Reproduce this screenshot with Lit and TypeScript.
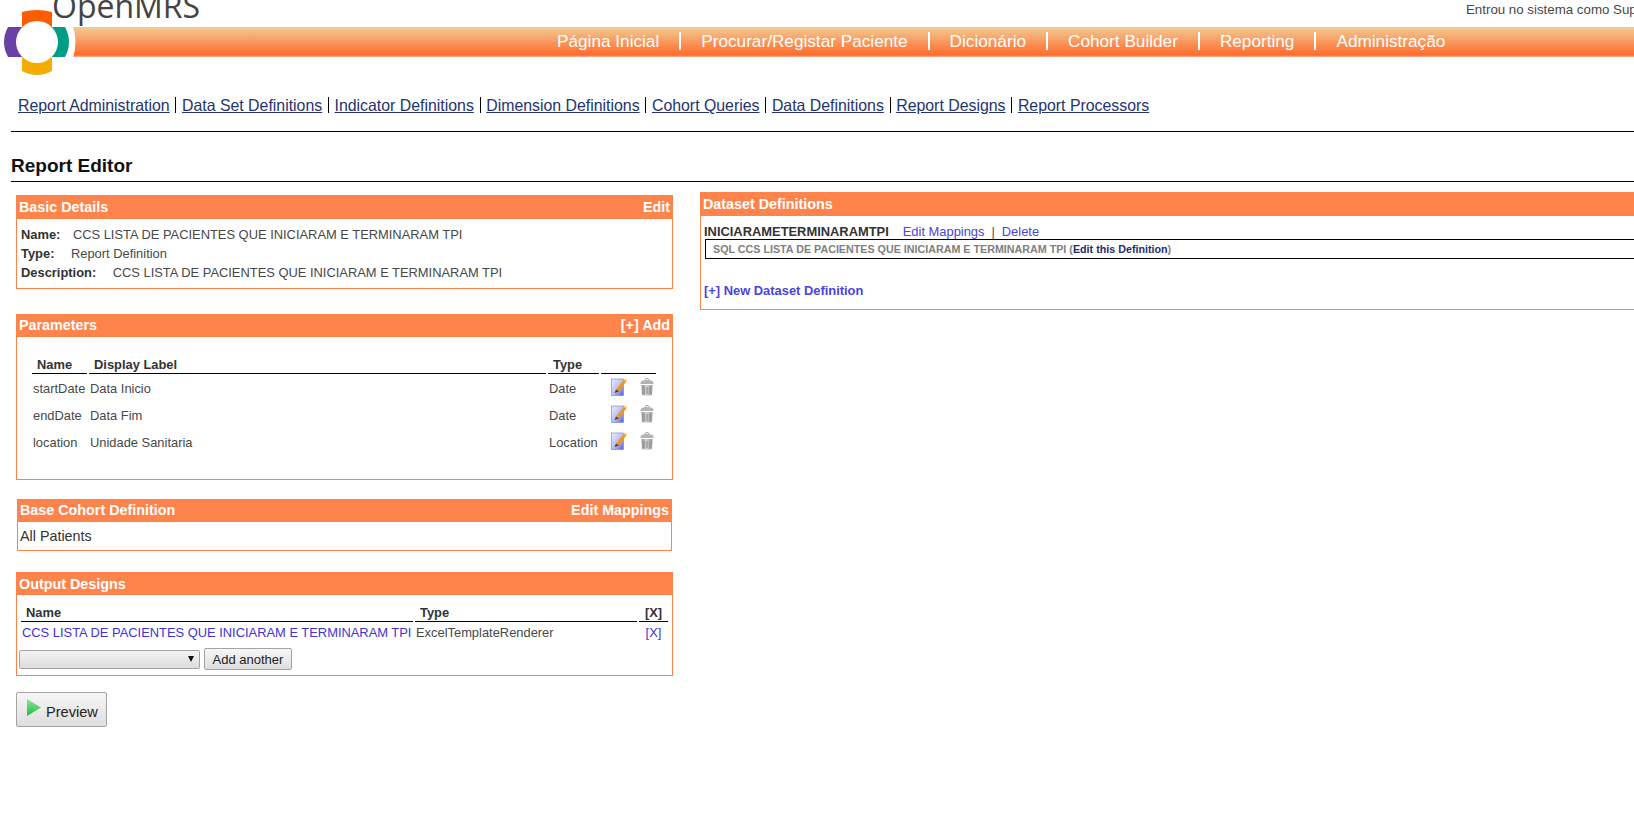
import { LitElement, css, html, svg } from "lit";
import { customElement } from "lit/decorators.js";

const NAV = ["Página Inicial", "Procurar/Registar Paciente", "Dicionário", "Cohort Builder", "Reporting", "Administração"];
const SUB = ["Report Administration", "Data Set Definitions", "Indicator Definitions", "Dimension Definitions", "Cohort Queries", "Data Definitions", "Report Designs", "Report Processors"];
const PARAMS = [
  { name: "startDate", label: "Data Inicio", type: "Date" },
  { name: "endDate", label: "Data Fim", type: "Date" },
  { name: "location", label: "Unidade Sanitaria", type: "Location" },
];
const REPORT = "CCS LISTA DE PACIENTES QUE INICIARAM E TERMINARAM TPI";

const logo = svg`
  <path d="M71 27 Q76 42 71 57" fill="none" stroke="#fff" stroke-width="4"/>
  <path d="M22 30 L22 12 Q37 8 52 12 L52 30 Z" fill="#fe5c00"/>
  <path d="M50 27 L65 27 Q73 42 65 57 L50 57 Z" fill="#009d86"/>
  <path d="M22 54 L22 71 Q37 79 52 71 L52 54 Z" fill="#f4ac00"/>
  <path d="M24 27 L8 27 Q0 42 8 57 L24 57 Z" fill="#6a3fa6"/>
  <circle cx="37" cy="42" r="21" fill="#fff"/>
`;

const editIcon = html`<svg class="icon" viewBox="0 0 16 18" width="16" height="18">
  <defs><linearGradient id="pg" x1="0" y1="0" x2="1" y2="1"><stop offset="0" stop-color="#eeeefc"/><stop offset=".55" stop-color="#b9bdf2"/><stop offset="1" stop-color="#4f5ad8"/></linearGradient></defs>
  <rect x=".5" y="1" width="12" height="16.500" fill="url(#pg)" stroke="#7f8cd6" stroke-width=".7"/>
  <path d="M5 11.500 L13.500 1 L16 2.500 L8 13.500 Z" fill="#f0961a"/>
  <path d="M13.500 1 L16 2.500 L15 3.800 L12.500 2.200 Z" fill="#f8c870"/>
  <path d="M5 11.500 L8 13.500 L3.500 15 Z" fill="#4a4030"/>
</svg>`;

const trashIcon = html`<svg class="icon" viewBox="0 0 14 18" width="14" height="18">
  <defs><linearGradient id="tr" x1="0" y1="0" x2="1" y2="0"><stop offset="0" stop-color="#8e8e8e"/><stop offset=".45" stop-color="#d4d4d4"/><stop offset="1" stop-color="#969696"/></linearGradient></defs>
  <path d="M5 2 Q5 .5 7 .5 Q9 .5 9 2" fill="none" stroke="#a0a0a0" stroke-width="1"/>
  <path d="M.5 5 Q.5 2 7 2 Q13.500 2 13.500 5 L13.500 6 L.5 6 Z" fill="#b4b4b4"/>
  <path d="M1.500 7 L12.500 7 L12 17 Q7 18.500 2 17 Z" fill="url(#tr)"/>
  <path d="M4 9 V16 M7 9 V16 M10 9 V16" stroke="#8a8a8a" stroke-width="1"/>
</svg>`;

@customElement("app-root")
export class AppRoot extends LitElement {
  render() {
    return html`
      <div class="page">
        <svg class="logo" viewBox="0 0 76 80" width="76" height="80">${logo}</svg>
        <div class="brand">OpenMRS</div>
        <div class="user">Entrou no sistema como Super User</div>
        <nav class="band">
          ${NAV.map((n) => html`<span class="nav-item">${n}</span>`)}
        </nav>
        <div class="sub">
          ${SUB.map((s) => html`<a class="sub-item" href="#">${s}</a>`)}
        </div>
        <hr class="rule" />
        <h2 class="title">Report Editor</h2>
        <div class="cols">
          <div class="left">
            <section class="panel basic">
              <header><span>Basic Details</span><span>Edit</span></header>
              <div class="details">
                <div><b class="tight">Name:</b><span>${REPORT}</span></div>
                <div><b>Type:</b><span>Report Definition</span></div>
                <div><b>Description:</b><span>${REPORT}</span></div>
              </div>
            </section>
            <section class="panel params">
              <header><span>Parameters</span><span>[+] Add</span></header>
              <table class="ptable">
                <thead><tr><th class="c1">Name</th><th class="c2">Display Label</th><th class="c3">Type</th><th class="c4"></th></tr></thead>
                <tbody>
                  ${PARAMS.map((p) => html`<tr>
                    <td>${p.name}</td><td>${p.label}</td><td>${p.type}</td>
                    <td class="acts">${editIcon}${trashIcon}</td>
                  </tr>`)}
                </tbody>
              </table>
            </section>
            <section class="panel cohort">
              <header><span>Base Cohort Definition</span><span>Edit Mappings</span></header>
              <div class="cohort-body">All Patients</div>
            </section>
            <section class="panel output">
              <header><span>Output Designs</span></header>
              <table class="otable">
                <thead><tr><th class="o1">Name</th><th class="o2">Type</th><th class="o3">[X]</th></tr></thead>
                <tbody><tr><td><a href="#">${REPORT}</a></td><td>ExcelTemplateRenderer</td><td class="o3"><a href="#">[X]</a></td></tr></tbody>
              </table>
              <div class="add-row">
                <div class="select"><span class="arrow"></span></div>
                <button class="btn">Add another</button>
              </div>
            </section>
            <button class="btn preview">
              <svg viewBox="0 0 16 18" width="16" height="18"><defs><linearGradient id="pv" x1="0" y1="0" x2="0" y2="1"><stop offset="0" stop-color="#8fe88f"/><stop offset="1" stop-color="#22b84a"/></linearGradient></defs><path d="M1 0 L15 8.500 L1 17 Z" fill="url(#pv)"/></svg>
              <span>Preview</span>
            </button>
          </div>
          <div class="right">
            <section class="panel dataset">
              <header><span>Dataset Definitions</span></header>
              <div class="ds-line"><b>INICIARAMETERMINARAMTPI</b><a href="#">Edit Mappings</a><span class="pipe">|</span><a href="#">Delete</a></div>
              <div class="ds-box">SQL ${REPORT} (<a href="#">Edit this Definition</a>)</div>
              <a class="ds-new" href="#">[+] New Dataset Definition</a>
            </section>
          </div>
        </div>
      </div>
    `;
  }

  static styles = css`
    :host {
      display: block;
      overflow: hidden;
      height: 820px;
      font-family: "Liberation Sans", Arial, sans-serif;
      font-size: 12.9px;
      color: #484848;
      background: #fff;
    }

    .page {
      position: relative;
      width: 1900px;
    }

    .logo {
      position: absolute;
      left: 0;
      top: 0;
    }

    .brand {
      position: absolute;
      left: 52px;
      top: -17px;
      font-family: "Open Sans", sans-serif;
      font-size: 32px;
      line-height: 46px;
      color: #444;
    }

    .user {
      height: 27px;
      padding-left: 1466px;
      line-height: 20px;
      font-size: 13.3px;
      white-space: nowrap;
    }

    .band {
      display: flex;
      align-items: flex-start;
      height: 30px;
      margin-left: 72px;
      padding: 5px 0 0 485px;
      background: linear-gradient(#f3cb93, #fe6a2c 94%, #ffa27a 97%);
      box-sizing: border-box;
    }

    .nav-item {
      color: #fff;
      font-size: 17.2px;
      padding-right: 20px;
      margin-right: 20px;
      line-height: 18px;
      border-right: 2.5px solid #fff;
    }

    .nav-item:last-child {
      border-right: none;
    }

    .sub {
      display: flex;
      margin: 40px 0 0 18px;
      height: 18px;
    }

    .sub-item {
      color: #25346f;
      font-size: 15.87px;
      height: 16px;
      line-height: 18px;
      padding-right: 5.7px;
      margin-right: 5.7px;
      border-right: 1px solid #000;
    }

    .sub-item:last-child {
      border-right: none;
    }

    .rule {
      margin: 16px 0 0 11px;
      border: 0;
      border-top: 1px solid #000;
    }

    .title {
      margin: 23px 0 0 11px;
      padding-bottom: 4px;
      font-size: 19px;
      line-height: 22px;
      color: #111;
      border-bottom: 1px solid #000;
    }

    .cols {
      display: flex;
      align-items: flex-start;
    }

    .left {
      width: 657px;
      margin-left: 16px;
      padding-top: 13px;
    }

    .right {
      flex: 1;
      margin-left: 27px;
      padding-top: 10px;
    }

    .panel {
      border: 1px solid #ff844c;
      box-sizing: border-box;
    }

    .panel header {
      display: flex;
      justify-content: space-between;
      height: 22px;
      padding: 0 2px;
      background: #ff844c;
      color: #fff;
      font-weight: bold;
      font-size: 14.33px;
      line-height: 22px;
    }

    .basic {
      height: 94px;
    }

    .basic header,
    .dataset header {
      height: 23px;
    }

    .params header,
    .cohort header {
      line-height: 21px;
    }

    .details {
      padding: 6px 4px;
      line-height: 19px;
    }

    .details b {
      color: #333;
      margin-right: 16.5px;
    }

    .details b.tight {
      margin-right: 12.5px;
    }

    .params {
      height: 166px;
      margin-top: 25px;
    }

    .ptable {
      border-collapse: separate;
      border-spacing: 2px 0;
      margin: 19px 0 0 13px;
      width: 628px;
    }

    th {
      text-align: left;
      font-weight: bold;
      color: #333;
      border-bottom: 1px solid #000;
      padding: 0 0 0 5px;
      line-height: 17px;
    }

    .c1 { width: 50px; }
    .c2 { width: 456px; }
    .c3 { width: 46px; }
    .c4 { width: 50px; }

    .ptable td {
      height: 26px;
      padding: 1px 1px 0;
    }

    .acts {
      white-space: nowrap;
    }

    .icon {
      vertical-align: middle;
      margin: -2px 0 0 9px;
    }

    .icon + .icon {
      margin-left: 13px;
    }

    .cohort {
      height: 52px;
      margin: 19px 1px 0;
    }

    .cohort-body {
      padding: 5px 2px;
      font-size: 14.33px;
      line-height: 18px;
      color: #333;
    }

    .output {
      height: 104px;
      margin-top: 21px;
    }

    .otable {
      border-collapse: separate;
      border-spacing: 2px 0;
      margin: 9px 0 0 2px;
      white-space: nowrap;
    }

    .otable td {
      padding: 2px 1px;
      line-height: 17px;
    }

    .otable a {
      color: #4033d6;
      text-decoration: none;
    }

    .o1 { width: 387px; }
    .o2 { width: 217px; }
    .o3 { width: 27px; text-align: center; padding-left: 0; }

    .add-row {
      display: flex;
      align-items: center;
      gap: 4px;
      margin: 5px 0 0 2px;
    }

    .select {
      position: relative;
      width: 181px;
      height: 19px;
      box-sizing: border-box;
      border: 1px solid #a4a4a4;
      border-radius: 2px;
      background: linear-gradient(#f4f4f4, #dcdcdc);
    }

    .arrow {
      position: absolute;
      right: 5px;
      top: 5px;
      border: 3.5px solid transparent;
      border-top: 6px solid #111;
      border-bottom: 0;
    }

    .btn {
      height: 22px;
      padding: 0 7.5px;
      border: 1px solid #a4a4a4;
      border-radius: 2px;
      background: linear-gradient(#f6f6f6, #dedede);
      font-family: inherit;
      font-size: 13px;
      color: #222;
    }

    .preview {
      display: flex;
      align-items: flex-start;
      width: 91px;
      height: 35px;
      margin-top: 16px;
      padding: 6px 0 0 9px;
      font-size: 14.6px;
    }

    .preview span {
      margin: 5px 0 0 4px;
    }

    .dataset {
      height: 118px;
    }

    .ds-line {
      padding: 8px 3px 0;
      line-height: 15px;
    }

    .ds-line b {
      color: #333;
      margin-right: 14px;
    }

    .ds-line a,
    .ds-new {
      color: #4a43e0;
      text-decoration: none;
    }

    .pipe {
      margin: 0 7px;
    }

    .ds-box {
      margin: 0 0 0 4px;
      height: 20px;
      box-sizing: border-box;
      padding-left: 7px;
      border: 1px solid #000;
      border-right: 0;
      font-size: 10.73px;
      font-weight: bold;
      color: #808080;
      line-height: 18px;
    }

    .ds-box a {
      color: #1f2d6b;
      text-decoration: none;
    }

    .ds-new {
      display: block;
      margin: 23px 0 0 3px;
      font-weight: bold;
      line-height: 17px;
    }
  `;
}
